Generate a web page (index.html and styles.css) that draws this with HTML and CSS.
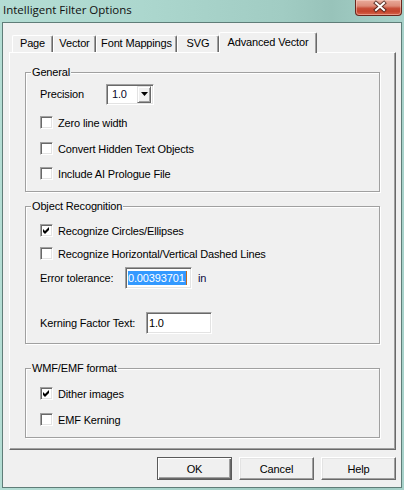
FILE: index.html
```html
<!DOCTYPE html>
<html>
<head>
<meta charset="utf-8">
<title>Intelligent Filter Options</title>
<link rel="stylesheet" href="styles.css">
</head>
<body>
<div class="window">
  <div class="titlebar">
    <span class="title">Intelligent Filter Options</span>
    <div class="close">
      <svg width="47" height="16" viewBox="0 0 47 16">
        <path d="M20 3 L28 10 M28 3 L20 10" stroke="#3b1a14" stroke-width="4" stroke-linecap="square" opacity="0.75"/>
        <path d="M20 3 L28 10 M28 3 L20 10" stroke="#ffffff" stroke-width="2" stroke-linecap="square"/>
      </svg>
    </div>
  </div>
  <div class="client">
    <div class="tabs">
      <div class="tab w-page">Page</div>
      <div class="tab w-vector">Vector</div>
      <div class="tab w-font">Font Mappings</div>
      <div class="tab w-svg">SVG</div>
      <div class="tab active w-adv">Advanced Vector</div>
    </div>
    <div class="panel">
      <div class="group g-general">
        <span class="legend">General</span>
        <div class="field-row">
          <span class="lbl lbl-prec">Precision</span>
          <div class="combo">
            <span class="combo-text">1.0</span>
            <span class="combo-btn">
              <svg width="7" height="4" viewBox="0 0 7 4"><path d="M0 0 H7 L3.5 4 Z" fill="#000"/></svg>
            </span>
          </div>
        </div>
        <div class="check m11"><span class="box"></span><span>Zero line width</span></div>
        <div class="check m13"><span class="box"></span><span>Convert Hidden Text Objects</span></div>
        <div class="check m12"><span class="box"></span><span>Include AI Prologue File</span></div>
      </div>

      <div class="group g-object">
        <span class="legend">Object Recognition</span>
        <div class="check"><span class="box"><svg class="tick" width="11" height="11" viewBox="1 1 11 11"><path d="M3 5 L5 7 L9 3 L9 6 L5 10 L3 8 Z" fill="#000"/></svg></span><span>Recognize Circles/Ellipses</span></div>
        <div class="check m10"><span class="box"></span><span>Recognize Horizontal/Vertical Dashed Lines</span></div>
        <div class="field-row m7">
          <span class="lbl lbl-err">Error tolerance:</span>
          <div class="edit w-err"><span class="sel">0.00393701</span></div>
          <span class="unit">in</span>
        </div>
        <div class="field-row m23">
          <span class="lbl lbl-kern">Kerning Factor Text:</span>
          <div class="edit w-kern"><span>1.0</span></div>
        </div>
      </div>

      <div class="group g-wmf">
        <span class="legend">WMF/EMF format</span>
        <div class="check"><span class="box"><svg class="tick" width="11" height="11" viewBox="1 1 11 11"><path d="M3 5 L5 7 L9 3 L9 6 L5 10 L3 8 Z" fill="#000"/></svg></span><span>Dither images</span></div>
        <div class="check m13"><span class="box"></span><span>EMF Kerning</span></div>
      </div>
    </div>
    <div class="buttons">
      <div class="btn default">OK</div>
      <div class="btn">Cancel</div>
      <div class="btn">Help</div>
    </div>
  </div>
</div>
</body>
</html>
```

FILE: styles.css
```css
* { box-sizing: border-box; }
html, body { margin: 0; padding: 0; }
body {
  width: 404px;
  height: 490px;
  overflow: hidden;
  font-family: "Liberation Sans", Arial, sans-serif;
  font-size: 11px;
  letter-spacing: -0.15px;
  color: #000;
  background: #a8d3ca;
}
.window {
  width: 404px;
  height: 490px;
  display: flex;
  flex-direction: column;
  background: linear-gradient(90deg, #b4ddd4 0%, #acd7ce 35%, #a1ccc3 70%, #98c3ba 82%, #a8d2ca 100%);
}
.titlebar {
  height: 22px;
  flex: none;
  display: flex;
  justify-content: space-between;
  align-items: flex-start;
}
.title {
  font-family: "Open Sans", "Noto Sans", sans-serif;
  font-size: 11.5px;
  letter-spacing: 0;
  line-height: 20px;
  margin-left: 3px;
  color: #101010;
}
.close {
  width: 47px;
  height: 16px;
  margin-right: 2px;
  border: 1px solid #6a261c;
  border-top: none;
  border-radius: 0 0 4px 4px;
  background: linear-gradient(180deg, #e9ab9b 0%, #dd8b78 40%, #c8503a 55%, #c4432c 75%, #d7654b 100%);
  box-shadow: inset 0 0 0 1px rgba(255, 220, 210, 0.45);
}
.close svg { display: block; }
.client {
  width: 400px;
  height: 466px;
  margin-left: 2px;
  flex: none;
  border: 1px solid #5f7d78;
  background: #f0f0f0;
  padding: 9px 5px 7px 6px;
  display: flex;
  flex-direction: column;
}
.tabs {
  height: 20px;
  flex: none;
  display: flex;
  align-items: flex-end;
  padding-left: 3px;
}
.tab {
  height: 17px;
  border-top: 1px solid #ffffff;
  border-left: 1px solid #ffffff;
  border-right: 1px solid #696969;
  border-radius: 2px 2px 0 0;
  box-shadow: inset -1px 0 #a0a0a0;
  text-align: center;
  line-height: 15px;
  white-space: nowrap;
}
.w-page { width: 41px; }
.w-vector { width: 43px; }
.w-font { width: 81px; }
.w-svg { width: 42px; }
.w-adv { width: 98px; }
.tab.active {
  height: 21px;
  margin-bottom: -1px;
  line-height: 18px;
  position: relative;
  z-index: 1;
  background: #f0f0f0;
}
.panel {
  width: 387px;
  height: 398px;
  flex: none;
  border: 1px solid;
  border-color: #ffffff #696969 #696969 #ffffff;
  box-shadow: inset -1px -1px #a0a0a0;
  padding: 19px 15px 0 15px;
}
.group {
  position: relative;
  border: 1px solid #a0a0a0;
  box-shadow: inset 1px 1px #ffffff, 1px 1px #ffffff;
  padding-left: 14px;
}
.legend {
  position: absolute;
  top: -7px;
  left: 5px;
  padding: 0 1px;
  line-height: 13px;
  background: #f0f0f0;
  white-space: nowrap;
}
.g-general { height: 120px; padding-top: 10px; }
.g-object { height: 138px; margin-top: 14px; padding-top: 17px; }
.g-wmf { height: 70px; margin-top: 24px; padding-top: 18px; }

.check {
  display: flex;
  align-items: center;
  height: 13px;
  white-space: nowrap;
}
.box {
  width: 13px;
  height: 13px;
  flex: none;
  margin-right: 5px;
  background: #ffffff;
  border: 1px solid;
  border-color: #a0a0a0 #ffffff #ffffff #a0a0a0;
  box-shadow: inset 1px 1px #696969, inset -1px -1px #e3e3e3;
}
.tick { display: block; }
.m7 { margin-top: 7px; }
.m10 { margin-top: 10px; }
.m11 { margin-top: 11px; }
.m12 { margin-top: 12px; }
.m13 { margin-top: 13px; }
.m23 { margin-top: 23px; }

.field-row {
  display: flex;
  align-items: center;
  height: 22px;
  white-space: nowrap;
}
.lbl { flex: none; }
.lbl-prec { width: 66px; }
.lbl-err { width: 85px; }
.lbl-kern { width: 106px; }
.combo {
  width: 48px;
  height: 21px;
  display: flex;
  align-items: center;
  background: #ffffff;
  border: 1px solid;
  border-color: #a0a0a0 #ffffff #ffffff #a0a0a0;
  box-shadow: inset 1px 1px #696969, inset -1px -1px #e3e3e3;
  padding: 2px 2px 2px 2px;
}
.combo-text { flex: 1; padding-left: 3px; color: #0a0a28; }
.combo-btn {
  width: 14px;
  height: 17px;
  flex: none;
  display: flex;
  align-items: center;
  justify-content: center;
  background: #f0f0f0;
  border: 1px solid;
  border-color: #e3e3e3 #696969 #696969 #e3e3e3;
  box-shadow: inset 1px 1px #ffffff, inset -1px -1px #a0a0a0;
}
.combo-btn svg { display: block; }
.edit {
  height: 22px;
  flex: none;
  display: flex;
  align-items: center;
  background: #ffffff;
  border: 1px solid;
  border-color: #a0a0a0 #ffffff #ffffff #a0a0a0;
  box-shadow: inset 1px 1px #696969, inset -1px -1px #e3e3e3;
  padding-left: 2px;
}
.w-err { width: 67px; }
.w-kern { width: 66px; }
.sel {
  background: #3399ff;
  color: #ffffff;
  line-height: 14px;
  padding-right: 1px;
  border-right: 1px solid #c06a20;
}
.unit { margin-left: 6px; color: #0a0a40; }

.buttons {
  flex: none;
  display: flex;
  justify-content: flex-end;
  gap: 7px;
  margin-top: 7px;
}
.btn {
  width: 75px;
  height: 23px;
  display: flex;
  align-items: center;
  justify-content: center;
  background: #f0f0f0;
  border: 1px solid;
  border-color: #ffffff #696969 #696969 #ffffff;
  box-shadow: inset -1px -1px #a0a0a0, inset 1px 1px #e3e3e3;
}
.btn.default {
  border: 1px solid #5a5a5a;
  box-shadow: inset 1px 1px #ffffff, inset -1px -1px #696969, inset -2px -2px #a0a0a0;
}
```
